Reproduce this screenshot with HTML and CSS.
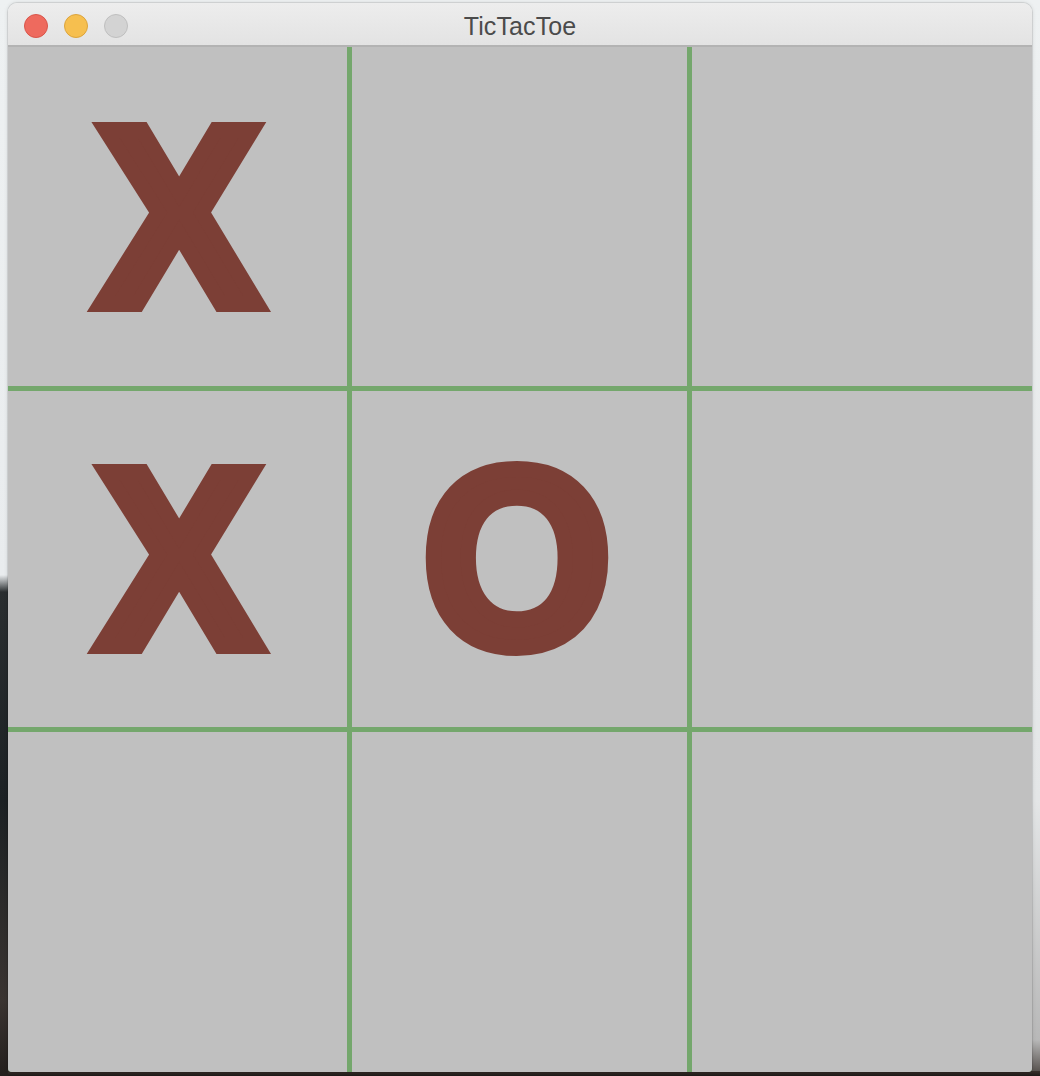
FILE: index.html
```html
<!DOCTYPE html>
<html lang="en">
<head>
<meta charset="utf-8">
<title>TicTacToe</title>
<link rel="stylesheet" href="styles.css">
</head>
<body>
<div class="window">
  <div class="titlebar">
    <div class="lights">
      <span class="light red"></span>
      <span class="light yellow"></span>
      <span class="light grey"></span>
    </div>
    <div class="title">TicTacToe</div>
    <div></div>
  </div>
  <div class="board">
    <div class="cell"><span class="mark">X</span></div>
    <div class="cell"></div>
    <div class="cell"></div>
    <div class="cell"><span class="mark">X</span></div>
    <div class="cell"><span class="mark mark-o">O</span></div>
    <div class="cell"></div>
    <div class="cell"></div>
    <div class="cell"></div>
    <div class="cell"></div>
  </div>
</div>
</body>
</html>
```

FILE: styles.css
```css
html, body {
  margin: 0;
  padding: 0;
}

body {
  width: 1040px;
  height: 1076px;
  overflow: hidden;
  background:
    linear-gradient(to bottom, #eef1f2 0px, #e9ecee 575px, #2a2e30 592px, #1c2124 800px, #3a3431 1000px, #241f1d 1076px) 0 0 / 8px 100% no-repeat,
    linear-gradient(to bottom, #3a302c, #1e1a18) 0 100% / 100% 5px no-repeat,
    linear-gradient(to bottom, #eef1f2 0px, #e4e6e7 800px, #b8b8b8 1040px, #4a4440 1076px);
  font-family: "Liberation Sans", Arial, sans-serif;
}

.window {
  margin: 3px 8px 0 8px;
  width: 1024px;
  height: 1069px;
  border-radius: 9px 9px 4px 4px;
  overflow: hidden;
  display: flex;
  flex-direction: column;
  box-shadow: 0 0 0 1px rgba(0, 0, 0, 0.08), 0 0 4px rgba(0, 0, 0, 0.15);
}

.titlebar {
  height: 42px;
  flex: none;
  display: grid;
  grid-template-columns: 1fr auto 1fr;
  align-items: center;
  background: linear-gradient(to bottom, #ededed, #e3e3e3);
  border-bottom: 2px solid #b3b3b3;
}

.lights {
  display: flex;
  gap: 16px;
  padding-left: 16px;
  padding-top: 4px;
}

.light {
  width: 22px;
  height: 22px;
  border-radius: 50%;
  border: 1px solid transparent;
}

.red {
  background: #ee6a5e;
  border-color: #d9554a;
}

.yellow {
  background: #f6bf4f;
  border-color: #dca43c;
}

.grey {
  background: #d3d3d3;
  border-color: #bfbfbf;
}

.title {
  font-size: 25px;
  color: #4b4b4b;
  padding-top: 4px;
  letter-spacing: 0.1px;
}

.board {
  flex: 1;
  display: grid;
  grid-template-columns: 339px 335px 1fr;
  grid-template-rows: 339px 336px 1fr;
  gap: 5px;
  background: #74a76c;
}

.cell {
  background: #c0c0c0;
  display: flex;
  align-items: center;
  justify-content: center;
  font-family: "Liberation Sans", Arial, sans-serif;
  font-weight: 700;
  font-size: 252px;
  line-height: 1;
  color: #7c3f36;
  -webkit-text-stroke: 16px #7c3f36;
}

.mark {
  display: inline-block;
  transform: translateX(2px) scaleX(0.955);
}

.mark-o {
  transform: translateX(-2px) scaleX(0.955);
}
```
